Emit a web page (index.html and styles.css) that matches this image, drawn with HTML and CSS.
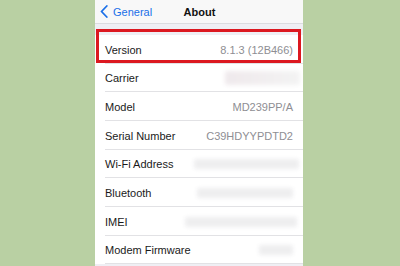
FILE: index.html
```html
<!DOCTYPE html>
<html lang="en">
<head>
    <meta charset="UTF-8">
    <meta name="viewport" content="width=device-width, initial-scale=1.0">
    <title>About</title>
    <link rel="stylesheet" href="styles.css">
</head>
<body>
    <div class="screen">
        <div class="navbar">
            <div class="back">
                <svg width="8" height="13" viewBox="0 0 8 13">
                    <path d="M6.8 1 L1.5 6.5 L6.8 12" fill="none" stroke="#1a6fe8" stroke-width="1.8" stroke-linecap="round" stroke-linejoin="round"/>
                </svg>
                <span>General</span>
            </div>
            <div class="title">About</div>
            <div></div>
        </div>

        <div class="list">
            <div class="row highlight">
                <span class="label">Version</span>
                <span class="value">8.1.3 (12B466)</span>
                <div class="marker"></div>
            </div>
            <div class="row">
                <span class="label">Carrier</span>
                <span class="blur carrier"></span>
            </div>
            <div class="row">
                <span class="label">Model</span>
                <span class="value">MD239PP/A</span>
            </div>
            <div class="row">
                <span class="label">Serial Number</span>
                <span class="value">C39HDYYPDTD2</span>
            </div>
            <div class="row">
                <span class="label">Wi-Fi Address</span>
                <span class="blur wifi"></span>
            </div>
            <div class="row">
                <span class="label">Bluetooth</span>
                <span class="blur bt"></span>
            </div>
            <div class="row">
                <span class="label">IMEI</span>
                <span class="blur imei"></span>
            </div>
            <div class="row">
                <span class="label">Modem Firmware</span>
                <span class="blur modem"></span>
            </div>
        </div>
    </div>
</body>
</html>
```

FILE: styles.css
```css
body {
    margin: 0;
    background-color: #b9d0a3;
    font-family: "Liberation Sans", Arial, sans-serif;
    height: 266px;
    overflow: hidden;
}
.screen {
    margin-left: 95px;
    width: 208px;
    height: 266px;
    background-color: #efeff4;
}
.navbar {
    height: 23px;
    display: grid;
    grid-template-columns: 1fr auto 1fr;
    align-items: center;
    background-color: #f8f8f8;
    border-bottom: 1px solid #dcdce0;
    font-size: 11px;
}
.back {
    display: flex;
    align-items: center;
    gap: 5px;
    padding-left: 5px;
    color: #1a6fe8;
}
.title {
    font-weight: bold;
    color: #111;
    padding-left: 1px;
}
.list {
    margin-top: 11px;
    background-color: #fff;
}
.row {
    position: relative;
    height: 28.67px;
    box-sizing: border-box;
    margin-left: 10px;
    padding-right: 10px;
    padding-top: 2px;
    display: flex;
    align-items: center;
    justify-content: space-between;
    border-bottom: 1px solid #e2e2e5;
    font-size: 11px;
}
.label {
    color: #1a1a1a;
}
.value {
    color: #8e8e93;
}
.marker {
    position: absolute;
    left: -9px;
    right: 2px;
    top: -6px;
    bottom: 0;
    border: 3px solid #dc1820;
}
.blur {
    height: 10px;
    background-color: #eeeeef;
    filter: blur(2px);
    border-radius: 2px;
}
.carrier {
    width: 75px;
    margin-right: -7px;
    height: 14px;
    background: linear-gradient(90deg, #efe9ec, #f3f3f3);
}
.wifi {
    width: 105px;
    margin-right: -6px;
}
.bt {
    width: 96px;
}
.imei {
    width: 112px;
    margin-right: -4px;
}
.modem {
    width: 34px;
}
```
